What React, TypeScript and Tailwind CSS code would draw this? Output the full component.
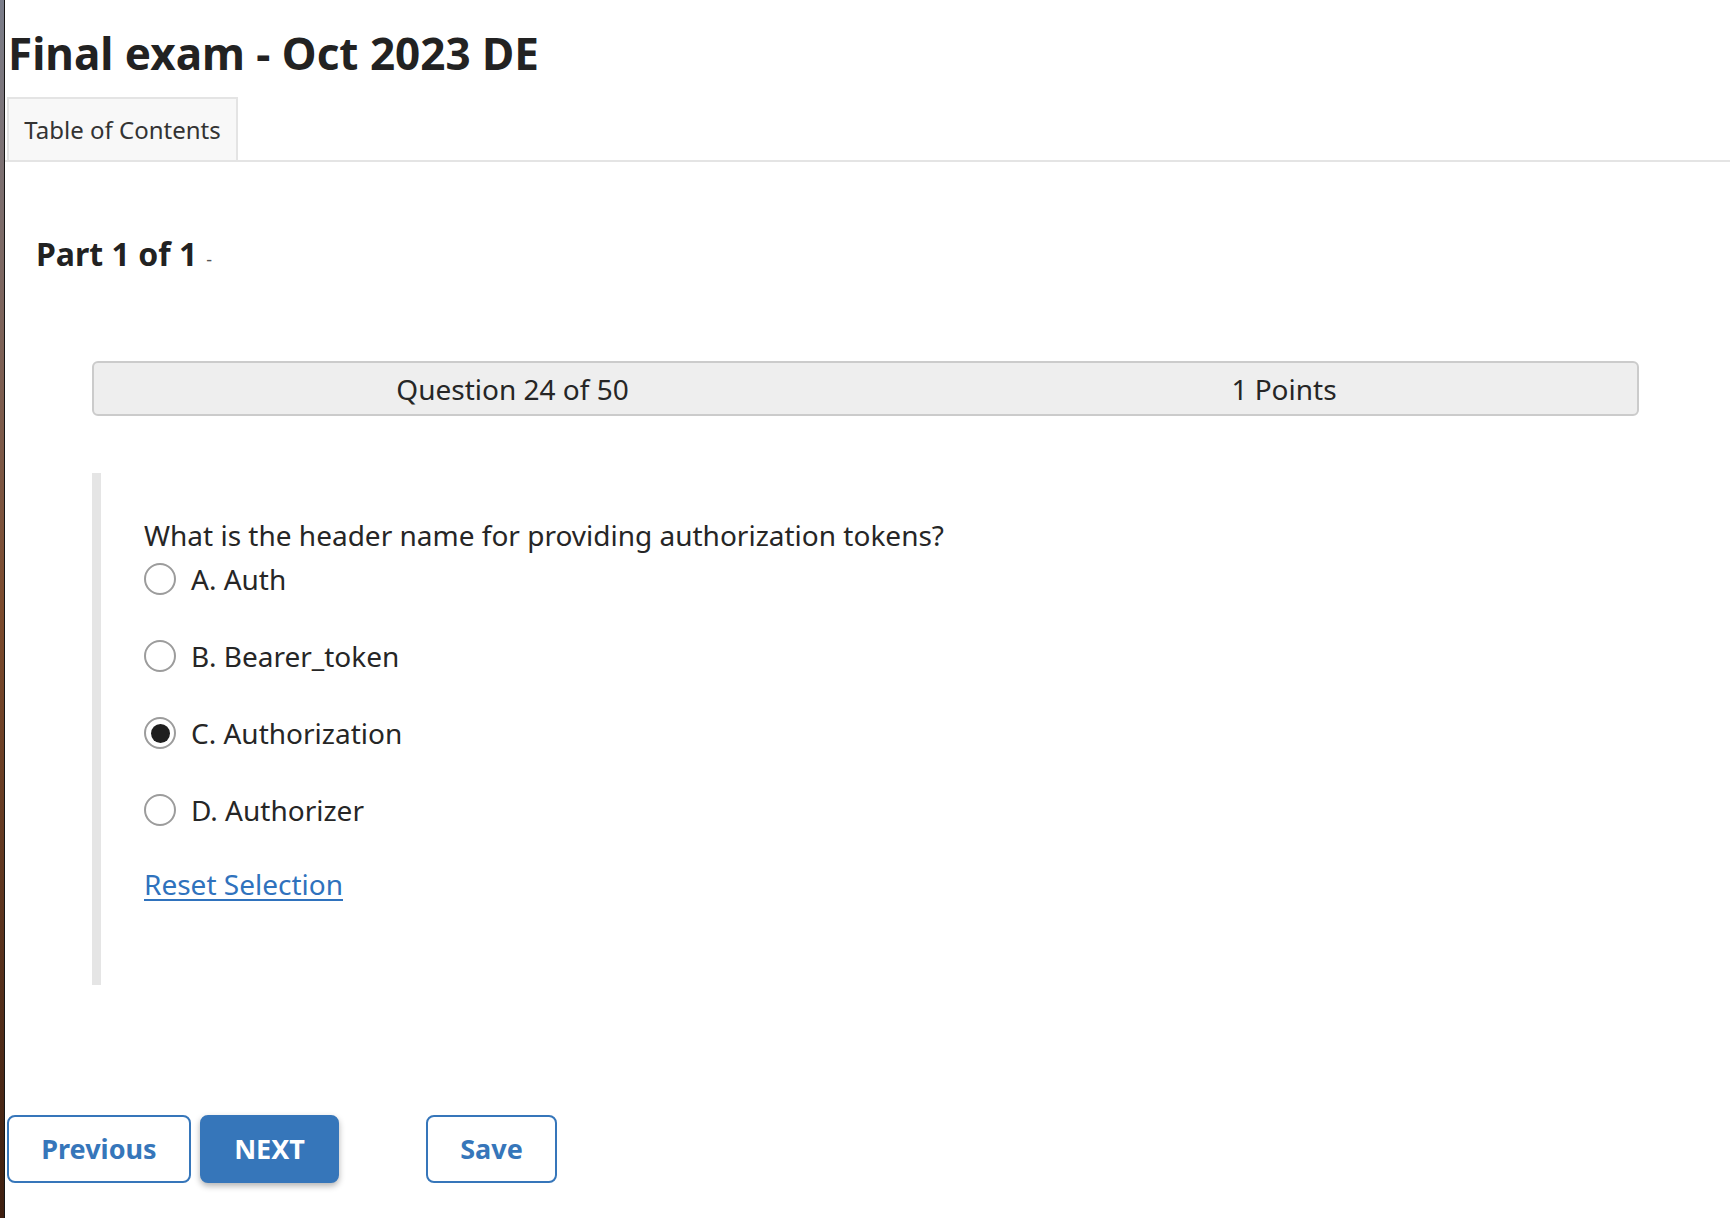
import React from "react";

function Radio({ checked }: { checked?: boolean }) {
  return (
    <span className="flex h-[32px] w-[32px] shrink-0 items-center justify-center rounded-full border-2 border-[#9c9c9c] bg-white">
      {checked ? <span className="h-[19px] w-[19px] rounded-full bg-[#1f1f1f]" /> : null}
    </span>
  );
}

function Option({ label, checked }: { label: string; checked?: boolean }) {
  return (
    <div className="flex h-[36px] items-center gap-[15px]">
      <Radio checked={checked} />
      <span className="text-[28px] leading-[36px]">{label}</span>
    </div>
  );
}

export default function App() {
  return (
    <div className="flex min-h-[1218px] w-full bg-white font-['Noto_Sans','Open_Sans',sans-serif] text-[#262626]">
      <div className="w-[5px] shrink-0 border-r border-[#151515] bg-linear-to-b from-[#7a7d8a] via-[#7b4a2c] to-[#3e1f10]" />
      <div className="min-w-0 flex-1">
        <div className="h-[97px] pl-[3px] pt-[25px]">
          <h1 className="text-[44px] font-bold leading-[56px] text-[#222222]">Final exam - Oct 2023 DE</h1>
        </div>
        <div className="flex h-[65px] border-b-2 border-[#e4e4e4] pl-[2px]">
          <div className="flex w-[231px] items-center justify-center border-x-2 border-t-2 border-[#e4e4e4] bg-[#f8f8f8] text-[24px] text-[#333333]">
            Table of Contents
          </div>
        </div>
        <div className="h-[199px] pl-[31px] pt-[72px]">
          <h2 className="flex items-baseline gap-[9px] text-[32px] font-bold leading-[40px] text-[#222222]">
            Part 1 of 1
            <span className="text-[18px] font-normal text-[#555555]">-</span>
          </h2>
        </div>
        <div className="ml-[87px] grid h-[55px] w-[1547px] grid-cols-[837px_1fr] items-center rounded-[6px] border-2 border-[#cbcbcb] bg-[#eeeeee] text-[28px] leading-[36px]">
          <div className="text-center">Question 24 of 50</div>
          <div className="text-center">1 Points</div>
        </div>
        <div className="ml-[87px] mt-[57px] h-[512px] border-l-[9px] border-[#e5e5e5] pl-[43px] pt-[44px]">
          <p className="text-[28px] leading-[36px]">What is the header name for providing authorization tokens?</p>
          <div className="mt-[8px] flex flex-col gap-[41px]">
            <Option label="A. Auth" />
            <Option label="B. Bearer_token" />
            <Option label="C. Authorization" checked />
            <Option label="D. Authorizer" />
          </div>
          <a href="#" className="mt-[38px] block w-fit text-[28px] leading-[36px] text-[#2f72bd] underline underline-offset-[4px]">
            Reset Selection
          </a>
        </div>
        <div className="ml-[2px] mt-[130px] flex items-center">
          <button className="flex h-[68px] w-[184px] items-center justify-center rounded-[8px] border-2 border-[#3676ba] bg-white text-[27px] font-bold text-[#3676ba]">
            Previous
          </button>
          <button className="ml-[9px] flex h-[68px] w-[139px] items-center justify-center rounded-[8px] border-2 border-[#3676ba] bg-[#3676ba] text-[27px] font-bold text-white shadow-[0_3px_6px_rgba(0,0,0,0.3)]">
            NEXT
          </button>
          <button className="ml-[87px] flex h-[68px] w-[131px] items-center justify-center rounded-[8px] border-2 border-[#3676ba] bg-white text-[27px] font-bold text-[#3676ba]">
            Save
          </button>
        </div>
      </div>
    </div>
  );
}
